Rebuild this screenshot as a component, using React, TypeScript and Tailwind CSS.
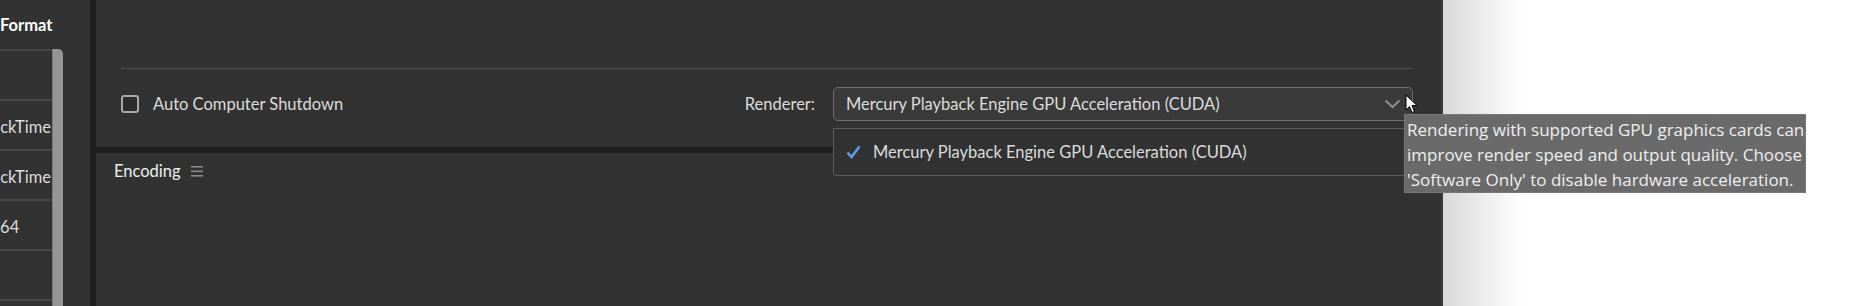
import React from "react";

const rows = ["", "QuickTime", "QuickTime", "H.264", "", ""];

const App = () => {
  return (
    <div className="relative flex h-[306px] w-[1875px] overflow-hidden bg-white font-['Lato',sans-serif] text-[16.5px] text-[#dcdcdc]">
      {/* left queue panel, cut off */}
      <div className="flex w-[90px] shrink-0 flex-col overflow-hidden bg-[#323232]">
        <div className="flex h-[49px] shrink-0 items-center pt-[2px] font-bold text-white">Format</div>
        <div className="flex flex-1">
          <div className="w-[52px] overflow-hidden border-t-2 border-[#454545]">
            {rows.map((r, i) => (
              <div
                key={i}
                className="flex h-[50px] shrink-0 items-center whitespace-nowrap border-b-2 border-[#474747] pt-[4px]"
              >
                <span className="ml-[-26px]">{r}</span>
              </div>
            ))}
          </div>
          <div className="w-[11px] rounded-tr-[5px] border-l border-[#7c7c7c] bg-[#959595]" />
        </div>
      </div>
      <div className="w-[6px] shrink-0 bg-[#1f1f1f]" />

      {/* main settings panel */}
      <div className="flex w-[1345px] shrink-0 flex-col">
        <div className="flex h-[147px] shrink-0 flex-col bg-[#323232] pl-[25px] pr-[28px] pt-[68px]">
          <div className="h-[1px] bg-[#505050]" />
          <div className="mt-[18px] flex h-[34px] items-center justify-between">
            <label className="flex items-center gap-[14px]">
              <span className="h-[18px] w-[18px] rounded-[3px] border-2 border-[#a9a9a9] bg-[#2c2c2c]" />
              <span>Auto Computer Shutdown</span>
            </label>
            <div className="flex items-center gap-[18px]">
              <span>Renderer:</span>
              <div className="flex h-[34px] w-[580px] items-center justify-between rounded-[5px] border border-[#6d6d6d] bg-[#3a3a3a] pl-[12px] pr-[11px]">
                <span>Mercury Playback Engine GPU Acceleration (CUDA)</span>
                <svg width="17" height="10" viewBox="0 0 17 10" fill="none">
                  <path d="M1.5 1.5 L8.5 8 L15.5 1.5" stroke="#8c8c8c" strokeWidth="2.2" />
                </svg>
              </div>
            </div>
          </div>
        </div>
        <div className="h-[6px] shrink-0 bg-[#1f1f1f]" />
        <div className="flex-1 bg-[#323232] pl-[18px] pt-[6px]">
          <div className="flex items-center gap-[10px]">
            <span className="text-[#eeeeee]">Encoding</span>
            <svg width="12" height="12" viewBox="0 0 12 12">
              <rect x="0" y="1" width="12" height="1.6" fill="#8a8a8a" />
              <rect x="0" y="5.5" width="12" height="1.6" fill="#8a8a8a" />
              <rect x="0" y="10" width="12" height="1.6" fill="#8a8a8a" />
            </svg>
          </div>
        </div>
      </div>
      <div className="w-[2px] shrink-0 bg-[#3a3a3a]" />
      <div className="flex-1 bg-[linear-gradient(to_right,#d9d9d9,#ffffff_80px)]" />

      {/* open dropdown list */}
      <div className="absolute left-[833px] top-[128px] flex h-[48px] w-[580px] items-center gap-[12px] rounded-b-[3px] border border-[#5e5e5e] bg-[#323232] pl-[12px]">
        <svg width="15" height="14" viewBox="0 0 15 14" fill="none">
          <path d="M1.5 7.5 L5.5 12 L13.5 1.5" stroke="#5b9de6" strokeWidth="2.6" />
        </svg>
        <span>Mercury Playback Engine GPU Acceleration (CUDA)</span>
      </div>

      {/* tooltip */}
      <div className="absolute left-[1404px] top-[114px] h-[79px] w-[402px] border border-[#777777] bg-[#6a6a6a] pl-[2px] pt-[2px] font-['Open_Sans',sans-serif] text-[17px] leading-[25px] text-[#efefef]">
        Rendering with supported GPU graphics cards can improve render speed and output quality. Choose 'Software Only' to disable hardware acceleration.
      </div>

      {/* mouse pointer */}
      <svg className="absolute left-[1405px] top-[94px]" width="13" height="20" viewBox="0 0 13 20">
        <path d="M1 1 L1 16 L4.5 12.5 L7 18.5 L9.5 17.5 L7 11.5 L12 11.5 Z" fill="white" stroke="black" strokeWidth="1" strokeLinejoin="round" />
      </svg>
    </div>
  );
};

export default App;
